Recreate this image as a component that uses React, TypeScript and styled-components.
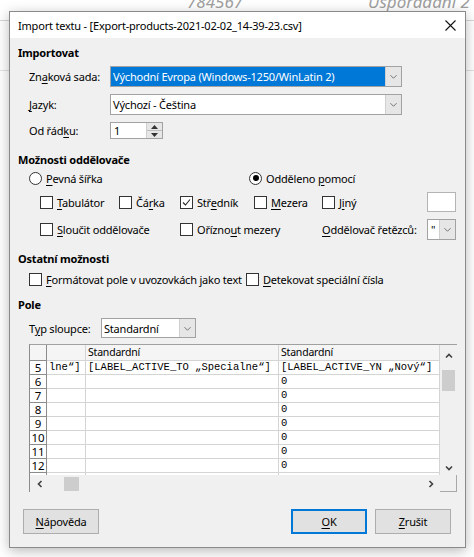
import React from 'react';
import styled, { createGlobalStyle } from 'styled-components';

const GlobalStyle = createGlobalStyle`
  html, body {
    margin: 0;
    padding: 0;
    background: #fff;
  }
  body {
    font-family: 'Noto Sans', 'Segoe UI', sans-serif;
    font-size: 11px;
    letter-spacing: -0.2px;
    color: #000;
  }
`;

const Desktop = styled.div`
  position: relative;
  width: 474px;
  height: 557px;
  overflow: hidden;
  box-sizing: border-box;
  padding: 11px 0 0 9px;
  background: #fff;
`;

/* spreadsheet peeking out behind the dialog */
const SheetBehind = styled.div`
  position: absolute;
  inset: 0;
  background:
    linear-gradient(#d6d6d6, #d6d6d6) 0 20px / 100% 1px no-repeat,
    linear-gradient(#e2e2e2, #e2e2e2) 0 70px / 100% 1px no-repeat;
`;

const SheetCell = styled.span<{ $left: number }>`
  position: absolute;
  top: -10px;
  left: ${(p) => p.$left}px;
  font-size: 17px;
  font-style: italic;
  letter-spacing: 0;
  color: #a0a0a0;
`;

const Window = styled.div`
  position: relative;
  width: 457px;
  height: 537px;
  box-sizing: border-box;
  border: 1px solid #8a8a8a;
  background: #f0f0f0;
  box-shadow: 0 3px 12px rgba(0, 0, 0, 0.28);
  display: flex;
  flex-direction: column;
`;

const TitleBar = styled.div`
  height: 26px;
  flex: none;
  background: #fff;
  display: flex;
  align-items: center;
  justify-content: space-between;
  padding-left: 8px;
`;

const Title = styled.span`
  white-space: nowrap;
`;

const CloseBox = styled.div`
  width: 30px;
  height: 26px;
  display: flex;
  align-items: center;
  justify-content: center;
`;

const Body = styled.div`
  flex: 1;
  display: flex;
  flex-direction: column;
  padding: 7px 8px 0 8px;
`;

const Heading = styled.div<{ $top: number }>`
  margin-top: ${(p) => p.$top}px;
  height: 16px;
  line-height: 16px;
  font-weight: 700;
`;

const FieldRow = styled.div<{ $top: number; $h: number }>`
  margin-top: ${(p) => p.$top}px;
  height: ${(p) => p.$h}px;
  padding-left: 11px;
  display: flex;
  align-items: center;
`;

const FieldLabel = styled.span<{ $w: number }>`
  width: ${(p) => p.$w}px;
  flex: none;
  white-space: nowrap;
`;

const Key = styled.u`
  text-decoration: underline;
  text-underline-offset: 2px;
`;

const Combo = styled.div<{ $w: number; $h: number }>`
  width: ${(p) => p.$w}px;
  height: ${(p) => p.$h}px;
  box-sizing: border-box;
  border: 1px solid #a2a2a2;
  background: #fff;
  display: flex;
`;

const ComboValue = styled.div<{ $selected?: boolean; $mono?: boolean }>`
  flex: 1;
  min-width: 0;
  padding-left: ${(p) => (p.$mono ? 3 : 2)}px;
  display: flex;
  align-items: center;
  white-space: nowrap;
  overflow: hidden;
  background: ${(p) => (p.$selected ? '#0078d7' : '#fff')};
  color: ${(p) => (p.$selected ? '#fff' : '#000')};
`;

const ComboButton = styled.div`
  width: 15px;
  flex: none;
  border-left: 1px solid #cfcfcf;
  background: #e6e6e6;
  display: flex;
  align-items: center;
  justify-content: center;
`;

const Spin = styled.div`
  width: 53px;
  height: 17px;
  box-sizing: border-box;
  border: 1px solid #a2a2a2;
  background: #fff;
  display: flex;
`;

const SpinValue = styled.div`
  flex: 1;
  padding-left: 3px;
  display: flex;
  align-items: center;
`;

const SpinButtons = styled.div`
  width: 15px;
  display: flex;
  flex-direction: column;
  border-left: 1px solid #cfcfcf;
`;

const SpinHalf = styled.div<{ $bottom?: boolean }>`
  flex: 1;
  background: #e6e6e6;
  border-top: ${(p) => (p.$bottom ? '1px solid #bdbdbd' : 'none')};
  display: flex;
  align-items: center;
  justify-content: center;
`;

const RadioRow = styled.div<{ $top: number }>`
  margin-top: ${(p) => p.$top}px;
  height: 16px;
  padding-left: 11px;
  display: grid;
  grid-template-columns: 220px 1fr;
  align-items: center;
`;

const Choice = styled.label<{ $span?: number }>`
  display: flex;
  align-items: center;
  gap: 4px;
  white-space: nowrap;
  grid-column: span ${(p) => p.$span ?? 1};
`;

const RadioDot = styled.span<{ $on?: boolean }>`
  width: 11px;
  height: 11px;
  flex: none;
  border: 1px solid #333;
  border-radius: 50%;
  background: #fff;
  display: flex;
  align-items: center;
  justify-content: center;
  &::after {
    content: '';
    width: 6px;
    height: 6px;
    border-radius: 50%;
    background: ${(p) => (p.$on ? '#000' : 'transparent')};
  }
`;

const Box = styled.span`
  width: 11px;
  height: 11px;
  flex: none;
  border: 1px solid #333;
  background: #fff;
  display: flex;
  align-items: center;
  justify-content: center;
`;

const OptionGrid = styled.div`
  margin-top: 6px;
  padding-left: 22px;
  display: grid;
  grid-template-columns: 79px 61px 74px 68px 105px 29px;
  grid-template-rows: 20px 21px;
  row-gap: 7px;
  align-items: center;
`;

const TextBox = styled.div`
  height: 20px;
  box-sizing: border-box;
  border: 1px solid #b4b4b4;
  background: #fff;
`;

const OtherRow = styled.div`
  margin-top: 4px;
  height: 16px;
  padding-left: 11px;
  display: grid;
  grid-template-columns: 217px 1fr;
  align-items: center;
`;

/* preview table */
const Preview = styled.div`
  margin: 6px 0 0 11px;
  width: 428px;
  height: 148px;
  display: grid;
  grid-template-columns: 1fr 17px;
  grid-template-rows: 1fr 17px;
`;

const Viewport = styled.div`
  overflow: hidden;
  background: #fff;
  border-left: 1px solid #8c8c8c;
  border-top: 1px solid #a0a0a0;
`;

const TableRow = styled.div<{ $h: number }>`
  height: ${(p) => p.$h}px;
  flex: none;
  display: grid;
  grid-template-columns: 17px 39px 193px 161px;
  box-sizing: border-box;
  border-bottom: 1px solid #d4d4d4;
`;

const RowNum = styled.div<{ $head?: boolean }>`
  box-sizing: border-box;
  border-right: 1px solid #8c8c8c;
  border-bottom: 1px solid #8c8c8c;
  margin-bottom: -1px;
  background: ${(p) => (p.$head ? '#f5f5f5' : '#fff')};
  text-align: center;
  font-size: 11.5px;
  line-height: 13px;
  overflow: hidden;
`;

const HeadCell = styled.div`
  box-sizing: border-box;
  border-right: 1px solid #d4d4d4;
  background: #f5f5f5;
  padding-left: 2px;
  font-size: 10.5px;
  line-height: 15px;
  white-space: nowrap;
  overflow: hidden;
`;

const Cell = styled.div`
  box-sizing: border-box;
  border-right: 1px solid #d4d4d4;
  padding-left: 2px;
  font-family: 'Liberation Mono', 'DejaVu Sans Mono', monospace;
  font-size: 10.5px;
  letter-spacing: 0;
  line-height: 13px;
  white-space: nowrap;
  overflow: hidden;
`;

const Rows = styled.div`
  display: flex;
  flex-direction: column;
`;

const VScroll = styled.div`
  background: #f0f0f0;
  border-top: 1px solid #a0a0a0;
  display: flex;
  flex-direction: column;
  align-items: center;
  padding-top: 7px;
`;

const VThumb = styled.div`
  width: 13px;
  height: 21px;
  margin-top: 10px;
  background: #cdcdcd;
`;

const Spacer = styled.div`
  flex: 1;
`;

const HScroll = styled.div`
  background: #f0f0f0;
  border-left: 1px solid #8c8c8c;
  display: flex;
  align-items: center;
  padding: 0 5px 0 6px;
`;

const HThumb = styled.div`
  width: 15px;
  height: 14px;
  margin-left: 20px;
  background: #cdcdcd;
`;

const Corner = styled.div`
  background: #f0f0f0;
  border-right: 1px solid #a8a8a8;
  border-bottom: 1px solid #a8a8a8;
  box-sizing: border-box;
`;

const ButtonBar = styled.div`
  margin-top: 17px;
  padding: 0 6px 0 5px;
  display: flex;
  gap: 8px;
`;

const PushButton = styled.div<{ $default?: boolean }>`
  width: 76px;
  height: 25px;
  box-sizing: border-box;
  border: ${(p) => (p.$default ? '2px solid #0078d7' : '1px solid #adadad')};
  background: #e1e1e1;
  display: flex;
  align-items: center;
  justify-content: center;
`;

const Chevron = () => (
  <svg width="7" height="7" viewBox="0 0 8 8">
    <path d="M0.5 2.5 L4 6 L7.5 2.5" fill="none" stroke="#666" strokeWidth="1" />
  </svg>
);

const BoldChevron = ({ dir }: { dir: 'up' | 'down' | 'left' | 'right' }) => {
  const rot = { down: 0, up: 180, left: 90, right: -90 }[dir];
  return (
    <svg width="8" height="8" viewBox="0 0 8 8" style={{ transform: `rotate(${rot}deg)` }}>
      <path d="M1 2.5 L4 5.5 L7 2.5" fill="none" stroke="#404040" strokeWidth="1.6" />
    </svg>
  );
};

const Triangle = ({ up }: { up?: boolean }) => (
  <svg width="7" height="4" viewBox="0 0 7 4">
    <path d={up ? 'M0 4 L3.5 0 L7 4 Z' : 'M0 0 L3.5 4 L7 0 Z'} fill="#333" />
  </svg>
);

const Tick = () => (
  <svg width="9" height="9" viewBox="0 0 9 9">
    <path d="M1 4.5 L3.5 7 L8 1.5" fill="none" stroke="#222" strokeWidth="1.1" />
  </svg>
);

const CloseIcon = () => (
  <svg width="11" height="11" viewBox="0 0 11 11">
    <path d="M0.5 0.5 L10.5 10.5 M10.5 0.5 L0.5 10.5" stroke="#111" strokeWidth="1.1" />
  </svg>
);

const numberRows = [6, 7, 8, 9, 10, 11, 12];

export default function App() {
  return (
    <>
      <GlobalStyle />
      <Desktop>
        <SheetBehind>
          <SheetCell $left={187}>784567</SheetCell>
          <SheetCell $left={368}>Uspořádání 2</SheetCell>
        </SheetBehind>
        <Window>
          <TitleBar>
            <Title>Import textu - [Export-products-2021-02-02_14-39-23.csv]</Title>
            <CloseBox>
              <CloseIcon />
            </CloseBox>
          </TitleBar>
          <Body>
            <Heading $top={0}>Importovat</Heading>
            <FieldRow $top={5} $h={21}>
              <FieldLabel $w={81}>
                Zn<Key>a</Key>ková sada:
              </FieldLabel>
              <Combo $w={292} $h={21}>
                <ComboValue $selected>Východní Evropa (Windows-1250/WinLatin 2)</ComboValue>
                <ComboButton>
                  <Chevron />
                </ComboButton>
              </Combo>
            </FieldRow>
            <FieldRow $top={7} $h={21}>
              <FieldLabel $w={81}>
                <Key>J</Key>azyk:
              </FieldLabel>
              <Combo $w={292} $h={21}>
                <ComboValue>Výchozí - Čeština</ComboValue>
                <ComboButton>
                  <Chevron />
                </ComboButton>
              </Combo>
            </FieldRow>
            <FieldRow $top={7} $h={17}>
              <FieldLabel $w={81}>
                Od řád<Key>k</Key>u:
              </FieldLabel>
              <Spin>
                <SpinValue>1</SpinValue>
                <SpinButtons>
                  <SpinHalf>
                    <Triangle up />
                  </SpinHalf>
                  <SpinHalf $bottom>
                    <Triangle />
                  </SpinHalf>
                </SpinButtons>
              </Spin>
            </FieldRow>

            <Heading $top={13}>Možnosti oddělovače</Heading>
            <RadioRow $top={2}>
              <Choice>
                <RadioDot />
                <span>
                  <Key>P</Key>evná šířka
                </span>
              </Choice>
              <Choice>
                <RadioDot $on />
                <span>
                  Odděleno <Key>p</Key>omocí
                </span>
              </Choice>
            </RadioRow>
            <OptionGrid>
              <Choice>
                <Box />
                <span>
                  <Key>T</Key>abulátor
                </span>
              </Choice>
              <Choice>
                <Box />
                <span>
                  Čá<Key>r</Key>ka
                </span>
              </Choice>
              <Choice>
                <Box>
                  <Tick />
                </Box>
                <span>
                  Stř<Key>e</Key>dník
                </span>
              </Choice>
              <Choice>
                <Box />
                <span>
                  <Key>M</Key>ezera
                </span>
              </Choice>
              <Choice>
                <Box />
                <span>
                  J<Key>i</Key>ný
                </span>
              </Choice>
              <TextBox />
              <Choice $span={2}>
                <Box />
                <span>
                  <Key>S</Key>loučit oddělovače
                </span>
              </Choice>
              <Choice $span={2}>
                <Box />
                <span>
                  Ořízno<Key>u</Key>t mezery
                </span>
              </Choice>
              <Choice>
                <span>
                  <Key>O</Key>ddělovač řetězců:
                </span>
              </Choice>
              <Combo $w={29} $h={21}>
                <ComboValue $mono>"</ComboValue>
                <ComboButton>
                  <Chevron />
                </ComboButton>
              </Combo>
            </OptionGrid>

            <Heading $top={11}>Ostatní možnosti</Heading>
            <OtherRow>
              <Choice>
                <Box />
                <span>
                  <Key>F</Key>ormátovat pole v uvozovkách jako text
                </span>
              </Choice>
              <Choice>
                <Box />
                <span>
                  <Key>D</Key>etekovat speciální čísla
                </span>
              </Choice>
            </OtherRow>

            <Heading $top={10}>Pole</Heading>
            <FieldRow $top={5} $h={20}>
              <FieldLabel $w={72}>
                T<Key>y</Key>p sloupce:
              </FieldLabel>
              <Combo $w={95} $h={20}>
                <ComboValue>Standardní</ComboValue>
                <ComboButton>
                  <Chevron />
                </ComboButton>
              </Combo>
            </FieldRow>

            <Preview>
              <Viewport>
                <Rows>
                  <TableRow $h={16}>
                    <RowNum $head />
                    <HeadCell />
                    <HeadCell>Standardní</HeadCell>
                    <HeadCell>Standardní</HeadCell>
                  </TableRow>
                  <TableRow $h={14}>
                    <RowNum>5</RowNum>
                    <Cell>lne“]</Cell>
                    <Cell>[LABEL_ACTIVE_TO „Specialne“]</Cell>
                    <Cell>[LABEL_ACTIVE_YN „Nový“]</Cell>
                  </TableRow>
                  {numberRows.map((n) => (
                    <TableRow key={n} $h={14}>
                      <RowNum>{n}</RowNum>
                      <Cell />
                      <Cell />
                      <Cell>0</Cell>
                    </TableRow>
                  ))}
                  <TableRow $h={14}>
                    <RowNum />
                    <Cell />
                    <Cell />
                    <Cell>0</Cell>
                  </TableRow>
                </Rows>
              </Viewport>
              <VScroll>
                <BoldChevron dir="up" />
                <VThumb />
                <Spacer />
                <BoldChevron dir="down" />
                <Spacer style={{ flex: 'none', height: 3 }} />
              </VScroll>
              <HScroll>
                <BoldChevron dir="left" />
                <HThumb />
                <Spacer />
                <BoldChevron dir="right" />
              </HScroll>
              <Corner />
            </Preview>

            <ButtonBar>
              <PushButton>
                <span>
                  <Key>N</Key>ápověda
                </span>
              </PushButton>
              <Spacer />
              <PushButton $default>
                <span>
                  <Key>O</Key>K
                </span>
              </PushButton>
              <PushButton>
                <span>
                  <Key>Z</Key>rušit
                </span>
              </PushButton>
            </ButtonBar>
          </Body>
        </Window>
      </Desktop>
    </>
  );
}
